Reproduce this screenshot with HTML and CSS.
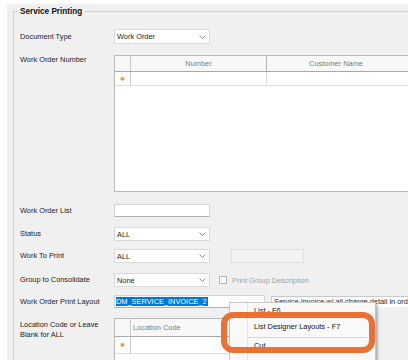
FILE: index.html
```html
<!DOCTYPE html>
<html lang="en">

<head>
	<meta charset="utf-8">
	<title>Service Printing</title>
	<link rel="stylesheet" href="styles.css">
</head>

<body>

	<div class="screen">

		<div class="group">
			<div class="legend">Service Printing</div>

			<div class="row row-doc">
				<span class="lbl">Document Type</span>
				<div class="combo combo-doc">
					<span>Work Order</span>
					<svg class="chev" width="7" height="4" viewBox="0 0 7 4"><polyline points="0.5,0.5 3.5,3.5 6.5,0.5" /></svg>
				</div>
			</div>

			<div class="row row-top row-wo">
				<span class="lbl">Work Order Number</span>
				<div class="grid wo-grid">
					<div class="g-head">
						<span class="g-ind"></span>
						<span class="g-col">Number</span>
						<span class="g-col g-last">Customer Name</span>
					</div>
					<div class="g-new">
						<span class="g-ind star">&#10033;</span>
						<span class="g-cell"></span>
						<span class="g-cell g-last"></span>
					</div>
				</div>
			</div>

			<div class="row row-list">
				<span class="lbl">Work Order List</span>
				<div class="field"></div>
			</div>

			<div class="row row-status">
				<span class="lbl">Status</span>
				<div class="combo">
					<span>ALL</span>
					<svg class="chev" width="7" height="4" viewBox="0 0 7 4"><polyline points="0.5,0.5 3.5,3.5 6.5,0.5" /></svg>
				</div>
			</div>

			<div class="row row-wtp">
				<span class="lbl">Work To Print</span>
				<div class="combo">
					<span>ALL</span>
					<svg class="chev" width="7" height="4" viewBox="0 0 7 4"><polyline points="0.5,0.5 3.5,3.5 6.5,0.5" /></svg>
				</div>
				<div class="disabled-box"></div>
			</div>

			<div class="row row-grp">
				<span class="lbl">Group to Consolidate</span>
				<div class="combo">
					<span>None</span>
					<svg class="chev" width="7" height="4" viewBox="0 0 7 4"><polyline points="0.5,0.5 3.5,3.5 6.5,0.5" /></svg>
				</div>
				<span class="chk"></span>
				<span class="chk-lbl">Print Group Description</span>
			</div>

			<div class="row row-layout">
				<span class="lbl">Work Order Print Layout</span>
				<div class="field field-wide"><span class="sel">DM_SERVICE_INVOICE_2</span></div>
				<div class="desc">Service Invoice w/ all charge detail in order</div>
			</div>

			<div class="row row-top row-loc">
				<span class="lbl lbl-2">Location Code or Leave<br>Blank for ALL</span>
				<div class="grid loc-grid">
					<div class="g-head">
						<span class="g-ind"></span>
						<span class="g-col g-left">Location Code</span>
					</div>
					<div class="g-new">
						<span class="g-ind star">&#10033;</span>
						<span class="g-cell"></span>
					</div>
				</div>
			</div>
		</div>

		<!-- right click menu on the layout field -->
		<div class="menu">
			<div class="mi">List - F6</div>
			<div class="mi">List Designer Layouts - F7</div>
			<div class="sep"></div>
			<div class="mi">Cut</div>
		</div>

		<!-- callout drawn over the screenshot -->
		<div class="mark"></div>

	</div>

</body>

</html>
```

FILE: styles.css
```css
* {
	box-sizing: border-box;
}

body {
	margin: 0;
	background: #fff;
	font-family: "Liberation Sans", Arial, sans-serif;
	font-size: 7.4px;
	color: #1c1c1c;
}

.screen {
	position: relative;
	width: 401px;
	height: 356px;
	margin: 4px 0 0 7px;
	background: #f0f0f0;
	overflow: hidden;
}

.group {
	width: 420px;
	height: 400px;
	margin: 7px 0 0 6px;
	padding-left: 6px;
	border-top: 1px solid #d3d3d3;
	border-left: 1px solid #d3d3d3;
}

.legend {
	width: max-content;
	margin: -6px 0 0 -3px;
	padding: 0 3px;
	background: #f0f0f0;
	font-weight: bold;
	font-size: 8.2px;
	line-height: 11px;
	color: #111;
}

.row {
	display: flex;
	align-items: center;
}

.row-top {
	align-items: flex-start;
}

.lbl {
	flex: none;
	width: 94px;
	line-height: 10px;
	white-space: nowrap;
}

.lbl-2 {
	padding-top: 2px;
	line-height: 9.5px;
}

.row-doc { margin-top: 12px; }
.row-wo { margin-top: 11px; }
.row-list { margin-top: 12px; }
.row-status { margin-top: 10px; }
.row-wtp { margin-top: 8px; }
.row-grp { margin-top: 10px; }
.row-layout { margin-top: 8px; }
.row-loc { margin-top: 10px; }

/* combo boxes */
.combo {
	flex: none;
	width: 96px;
	height: 14px;
	display: flex;
	align-items: center;
	justify-content: space-between;
	padding: 0 3px 0 2px;
	background: #fff;
	border: 1px solid #d9d9d9;
}

.combo-doc {
	height: 15px;
}

.chev polyline {
	fill: none;
	stroke: #8a8a8a;
	stroke-width: 1;
}

/* text boxes */
.field {
	flex: none;
	width: 96px;
	height: 13px;
	background: #fff;
	border: 1px solid #d4d4d4;
	border-bottom-color: #b0b0b0;
}

.field-wide {
	width: 151px;
	display: flex;
	align-items: center;
	padding-left: 1px;
}

.sel {
	background: #0078d7;
	color: #fff;
	line-height: 9px;
	padding-right: 1px;
}

.desc {
	flex: none;
	width: 150px;
	height: 11px;
	margin-left: 6px;
	padding-left: 2px;
	background: #fff;
	border-top: 1px solid #c9c9c9;
	border-left: 1px solid #c9c9c9;
	line-height: 10px;
	white-space: nowrap;
}

.disabled-box {
	width: 73px;
	height: 14px;
	margin-left: 21px;
	background: #f3f3f3;
	border: 1px solid #e0e0e0;
}

.chk {
	width: 8px;
	height: 8px;
	margin-left: 9px;
	background: #fbfbfb;
	border: 1px solid #b4b4b4;
}

.chk-lbl {
	margin-left: 5px;
	color: #a2a2a2;
	white-space: nowrap;
}

/* grids */
.grid {
	flex: none;
	background: #fff;
	border: 1px solid #b9b9b9;
}

.wo-grid {
	width: 300px;
	height: 137px;
}

.loc-grid {
	width: 260px;
	height: 60px;
}

.g-head {
	display: flex;
	height: 16px;
	background: #f8f8f8;
	border-bottom: 1px solid #a9a9a9;
}

.loc-grid .g-head {
	height: 18px;
}

.g-ind {
	flex: none;
	width: 16px;
	border-right: 1px solid #c8c8c8;
}

.g-col {
	flex: none;
	width: 136px;
	border-right: 1px solid #b4b4b4;
	text-align: center;
	line-height: 15px;
	color: #7c7c7c;
}

.wo-grid .g-last {
	width: 138px;
	border-right: none;
}

.loc-grid .g-col {
	width: 140px;
	line-height: 17px;
}

.g-left {
	text-align: left;
	padding-left: 2px;
}

.g-new {
	display: flex;
	height: 14px;
	border-bottom: 1px solid #dcdcdc;
}

.loc-grid .g-new {
	height: 17px;
}

.g-cell {
	flex: none;
	width: 136px;
	border-right: 1px solid #dcdcdc;
}

.star {
	font-family: "DejaVu Sans", sans-serif;
	font-size: 6px;
	line-height: 14px;
	text-align: center;
	color: #f39325;
}

.loc-grid .star {
	line-height: 16px;
}

/* context menu */
.menu {
	position: absolute;
	left: 222px;
	top: 298px;
	width: 147px;
	height: 70px;
	background: #f9f9f9 linear-gradient(to right, transparent 17px, #e4e4e4 17px, #e4e4e4 18px, transparent 18px);
	border: 1px solid #c6c6c6;
	box-shadow: 2px 2px 2px rgba(0, 0, 0, 0.25);
}

.mi {
	height: 16px;
	line-height: 16px;
	padding-left: 24px;
	color: #111;
}

.sep {
	height: 3px;
	margin: 0 8px 0 18px;
	border-bottom: 1px solid #d7d7d7;
}

/* orange highlight */
.mark {
	position: absolute;
	left: 214px;
	top: 308px;
	width: 154px;
	height: 41px;
	border: 6px solid #e97132;
	border-radius: 12px;
}
```
